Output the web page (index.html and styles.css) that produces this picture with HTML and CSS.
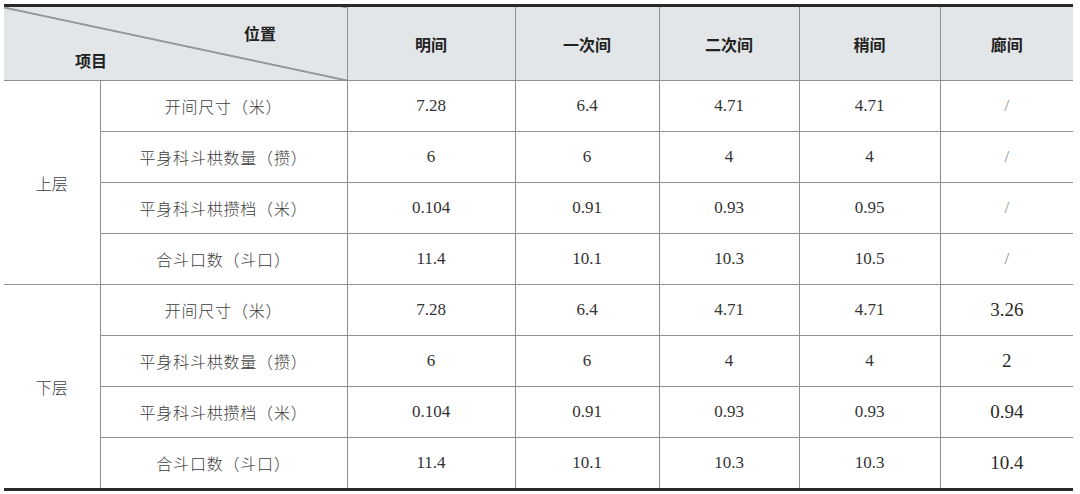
FILE: index.html
```html
<!DOCTYPE html>
<html lang="zh">
<head>
<meta charset="utf-8">
<link rel="stylesheet" href="styles.css">
</head>
<body>
<div class="wrap">
<table class="grid">
  <colgroup>
    <col class="c1"><col class="c2"><col class="c3"><col class="c4"><col class="c5"><col class="c6"><col class="c7">
  </colgroup>
  <thead>
    <tr>
      <th colspan="2" class="diag">
        <div class="diag-inner">
          <span class="pos">位置</span>
          <span class="item">项目</span>
        </div>
      </th>
      <th>明间</th>
      <th>一次间</th>
      <th>二次间</th>
      <th>稍间</th>
      <th>廊间</th>
    </tr>
  </thead>
  <tbody class="upper">
    <tr>
      <td rowspan="4" class="floor">上层</td>
      <td class="label">开间尺寸（米）</td>
      <td class="num">7.28</td><td class="num">6.4</td><td class="num">4.71</td><td class="num">4.71</td><td class="slash">/</td>
    </tr>
    <tr>
      <td class="label">平身科斗栱数量（攒）</td>
      <td class="num">6</td><td class="num">6</td><td class="num">4</td><td class="num">4</td><td class="slash">/</td>
    </tr>
    <tr>
      <td class="label">平身科斗栱攒档（米）</td>
      <td class="num">0.104</td><td class="num">0.91</td><td class="num">0.93</td><td class="num">0.95</td><td class="slash">/</td>
    </tr>
    <tr>
      <td class="label">合斗口数（斗口）</td>
      <td class="num">11.4</td><td class="num">10.1</td><td class="num">10.3</td><td class="num">10.5</td><td class="slash">/</td>
    </tr>
  </tbody>
  <tbody class="lower">
    <tr>
      <td rowspan="4" class="floor">下层</td>
      <td class="label">开间尺寸（米）</td>
      <td class="num">7.28</td><td class="num">6.4</td><td class="num">4.71</td><td class="num">4.71</td><td class="num big">3.26</td>
    </tr>
    <tr>
      <td class="label">平身科斗栱数量（攒）</td>
      <td class="num">6</td><td class="num">6</td><td class="num">4</td><td class="num">4</td><td class="num big">2</td>
    </tr>
    <tr>
      <td class="label">平身科斗栱攒档（米）</td>
      <td class="num">0.104</td><td class="num">0.91</td><td class="num">0.93</td><td class="num">0.93</td><td class="num big">0.94</td>
    </tr>
    <tr>
      <td class="label">合斗口数（斗口）</td>
      <td class="num">11.4</td><td class="num">10.1</td><td class="num">10.3</td><td class="num">10.3</td><td class="num big">10.4</td>
    </tr>
  </tbody>
</table>
</div>
</body>
</html>
```

FILE: styles.css
```css
html, body {
  margin: 0;
  padding: 0;
  background: #ffffff;
}

.wrap {
  padding: 4px 7px 0 4px;
}

.grid {
  width: 1069px;
  border-collapse: collapse;
  table-layout: fixed;
  font-family: "Liberation Serif", "Noto Sans CJK SC", serif;
  color: #333333;
  border-top: 3px solid #2a2a2a;
  border-bottom: 3px solid #2a2a2a;
}

.c1 { width: 96px; }
.c2 { width: 247px; }
.c3 { width: 168px; }
.c4 { width: 144px; }
.c5 { width: 140px; }
.c6 { width: 141px; }
.c7 { width: 133px; }

.grid th,
.grid td {
  border: 1px solid #8f8f8f;
  text-align: center;
  vertical-align: middle;
  padding: 0;
}

.grid tr > :first-child { border-left: none; }
.grid tr > :last-child { border-right: none; }

.grid thead th {
  background: #e3e6e8;
  height: 73px;
  font-family: "Noto Sans CJK SC", sans-serif;
  font-weight: 700;
  font-size: 16px;
  color: #222222;
  border-top: none;
}

.grid thead th.diag {
  border-left: none;
  background: linear-gradient(to top right, #e3e6e8 calc(50% - 0.9px), #3a3a3a 50%, #e3e6e8 calc(50% + 0.9px));
}

.diag-inner {
  position: relative;
  height: 73px;
}

.diag-inner .pos {
  position: absolute;
  left: 240px;
  top: 14px;
}

.diag-inner .item {
  position: absolute;
  left: 71px;
  top: 41px;
}

.grid tbody td {
  height: 50px;
}

.grid tbody.lower tr:first-child td {
  border-top: 1px solid #8f8f8f;
}

.grid td.floor,
.grid td.label {
  font-family: "Noto Sans CJK SC", sans-serif;
  font-weight: 300;
  font-size: 16px;
  color: #3d3d3d;
}

.grid td.label {
  letter-spacing: 0.8px;
}

.grid td.num {
  font-size: 17px;
  color: #333333;
}

.grid td.num.big {
  font-size: 19px;
  color: #2a2a2a;
}

.grid td.slash {
  font-size: 17px;
  color: #8a8a8a;
}
```
